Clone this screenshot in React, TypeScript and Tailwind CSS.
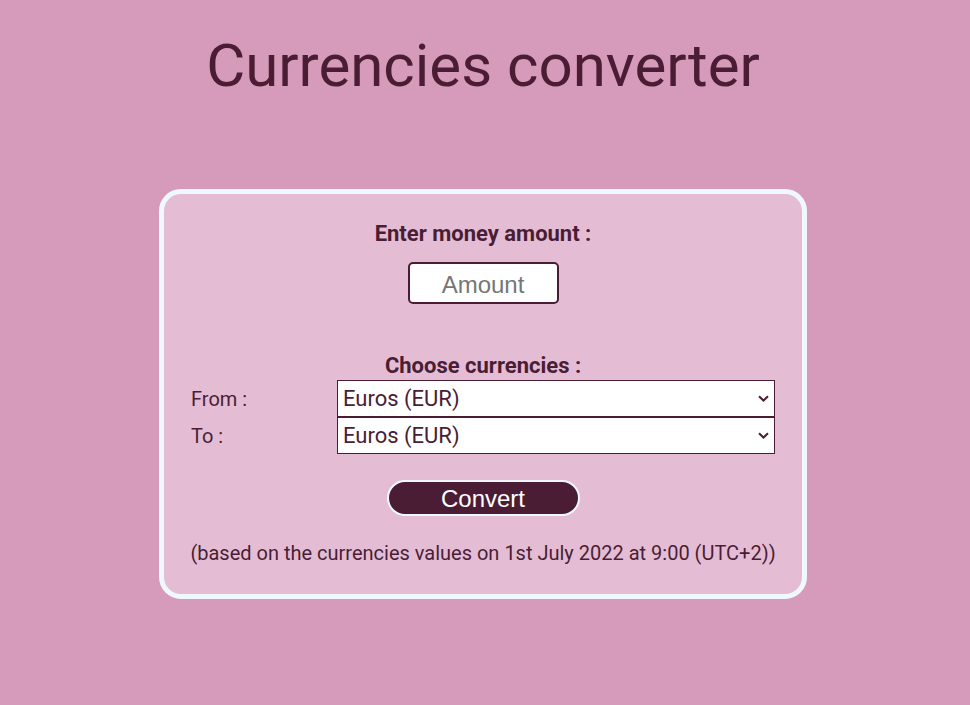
import { useState } from "react";

const currencies = ["Euros (EUR)", "US Dollars (USD)", "British Pounds (GBP)", "Japanese Yen (JPY)"];

export default function App() {
  const [amount, setAmount] = useState("");
  const [from, setFrom] = useState(currencies[0]);
  const [to, setTo] = useState(currencies[0]);

  return (
    <div className="min-h-[705px] bg-[#d69bba] text-[#4a1d35] font-['Roboto',sans-serif] flex flex-col items-center pr-[4px]">
      <h1 className="text-[60px] leading-[70px] mt-[31px] font-normal">Currencies converter</h1>

      <div className="mt-[88px] w-[648px] bg-[#e4bdd5] border-[5px] border-[#f0f8ff] rounded-[22px] px-[27px] pt-[27px] pb-[29px] flex flex-col items-center">
        <label className="text-[22px] font-bold leading-[26px]">Enter money amount :</label>
        <input
          value={amount}
          onChange={(e) => setAmount(e.target.value)}
          placeholder="Amount"
          className="mt-[15px] w-[151px] h-[42px] pt-[3px] bg-white border-2 border-[#4a1d35] rounded-[5px] text-center text-[24px] font-['Liberation_Sans',sans-serif] placeholder:text-[#767676] outline-none"
        />

        <div className="mt-[49px] text-[22px] font-bold leading-[26px]">Choose currencies :</div>
        <div className="mt-[1px] w-full grid grid-cols-[146px_1fr] items-center">
          <span className="text-[20px]">From :</span>
          <Select value={from} onChange={setFrom} />
          <span className="text-[20px]">To :</span>
          <Select value={to} onChange={setTo} />
        </div>

        <button className="mt-[26px] w-[193px] h-[36px] pt-[1px] bg-[#4a1d35] text-white border-2 border-[#f0f8ff] rounded-full text-[24px] leading-none font-['Liberation_Sans',sans-serif]">
          Convert
        </button>

        <p className="mt-[25px] text-[20px] leading-6 whitespace-nowrap">
          (based on the currencies values on 1st July 2022 at 9:00 (UTC+2))
        </p>
      </div>
    </div>
  );
}

function Select({ value, onChange }: { value: string; onChange: (v: string) => void }) {
  return (
    <div className="relative h-[37px] bg-white border border-[#4a1d35]">
      <select
        value={value}
        onChange={(e) => onChange(e.target.value)}
        className="appearance-none w-full h-full bg-transparent pl-[5px] text-[22px] text-[#4a1d35] outline-none"
      >
        {currencies.map((c) => (
          <option key={c}>{c}</option>
        ))}
      </select>
      <svg className="absolute right-[5px] top-[14px] pointer-events-none" width="11" height="7" viewBox="0 0 11 7">
        <path d="M1 1.2 L5.5 5.5 L10 1.2" fill="none" stroke="#4a1d35" strokeWidth="2" />
      </svg>
    </div>
  );
}
